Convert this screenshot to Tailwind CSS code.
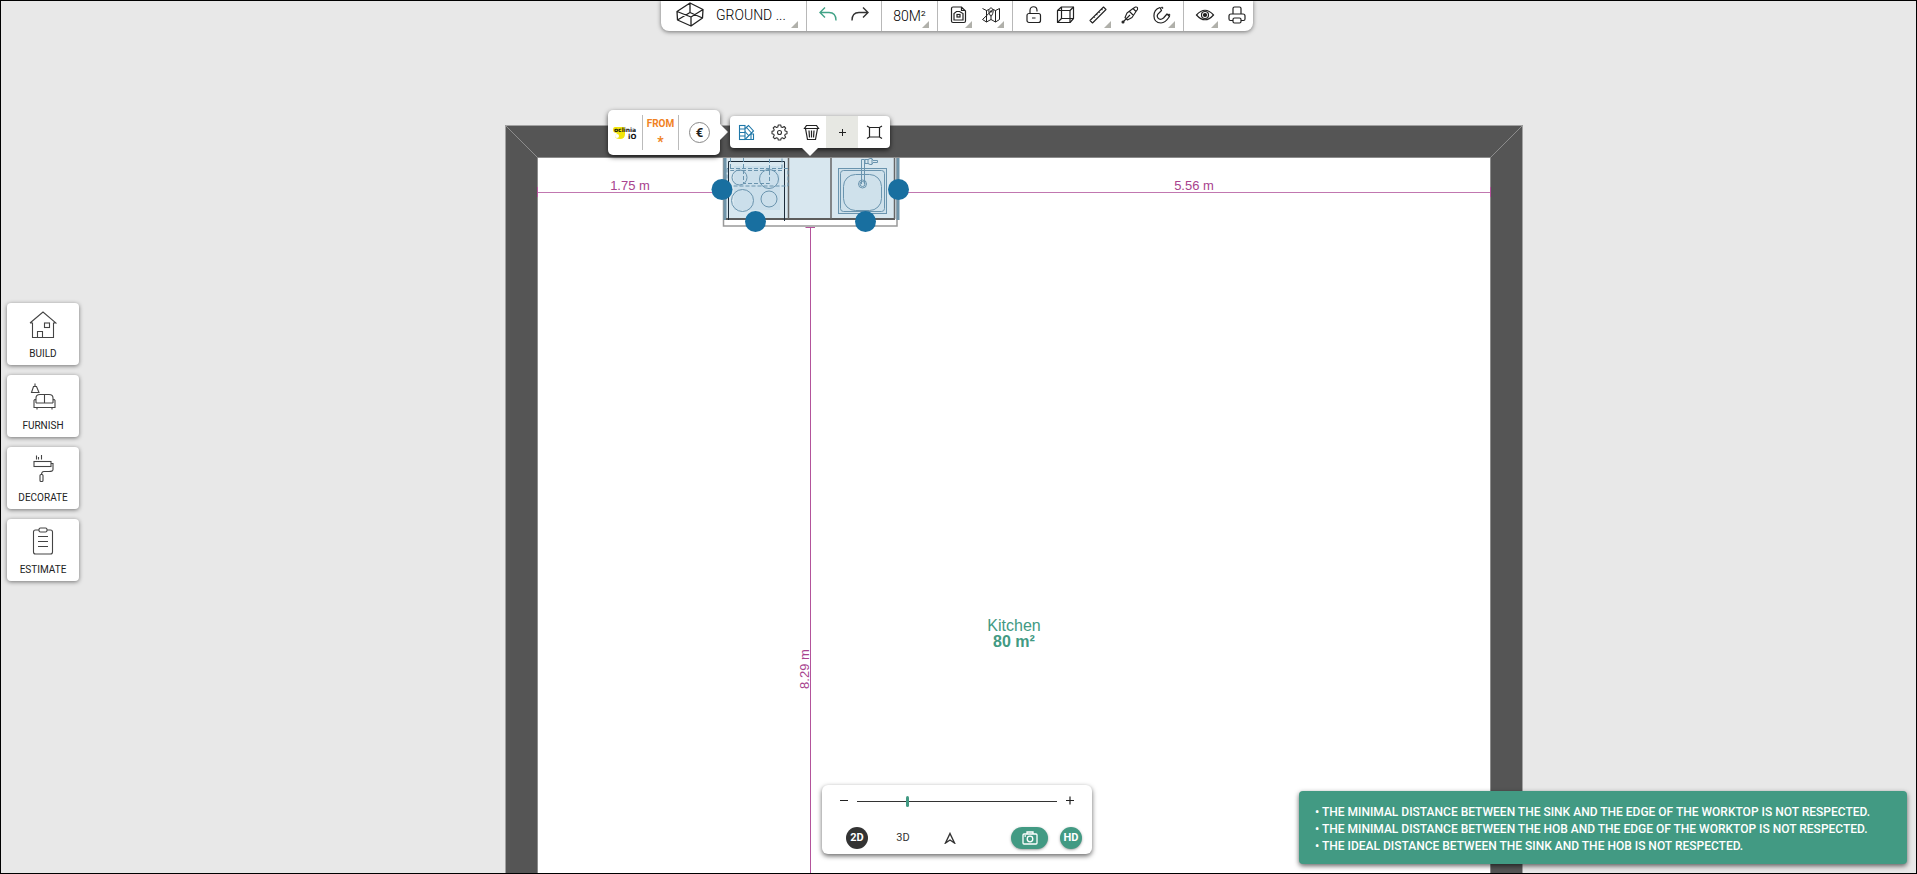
<!DOCTYPE html>
<html lang="en">
<head>
    <meta charset="UTF-8">
    <meta name="viewport" content="width=device-width, initial-scale=1">
    <title>Floor planner</title>
    <script src="https://cdn.jsdelivr.net/npm/@tailwindcss/browser@4"></script>
</head>
<body class="bg-[#e8e8e8] text-[#333333] font-['Roboto',sans-serif]">
<main class="relative h-screen overflow-hidden">

    <!-- Floor plan -->
    <svg class="absolute inset-0 w-full h-full" fill="none">
        <path d="M505.5 900V125.5H1522.5V900" fill="#555555" stroke="#a2a2a2"/>
        <path d="M537.5 900V157.5H1490.5V900" fill="#ffffff" stroke="#8c8c8c"/>
        <path d="M505.5 125.5L537.5 157.5M1522.5 125.5L1490.5 157.5" stroke="#8c8c8c"/>

        <!-- Kitchen unit -->
        <rect x="723" y="158" width="174" height="69" fill="#ffffff"/>
        <path d="M723.5 158V226H897V158" stroke="#999999" stroke-width="1.5"/>
        <rect x="725" y="158" width="171" height="61" fill="#d8e7ef"/>
        <rect x="734" y="166" width="46" height="44" fill="#cbdfeb"/>
        <rect x="839" y="169" width="48" height="44" fill="#cfe1eb"/>
        <path d="M725 158V220M898 158V220" stroke="#6f94a9" stroke-width="3"/>
        <path d="M726 219H895" stroke="#5c5c5c" stroke-width="2"/>
        <path d="M788.5 158V219M831 158V219M894.5 158V219" stroke="#666666" stroke-width="1.5"/>
        <path d="M728.5 220V161.5H784.5V221" stroke="#1d2d3b"/>
        <g stroke="#6a94ae">
            <circle cx="739.5" cy="177.5" r="7.5"/>
            <circle cx="769" cy="179" r="9.5"/>
            <circle cx="742.5" cy="200.5" r="11"/>
            <circle cx="769" cy="199" r="8"/>
            <path d="M730.5 158V170.5H782V158M743.5 158V183.5H769.5V158M727 168.5V186H788V168.5H727" stroke-dasharray="4 2"/>
            <rect x="838.5" y="168.5" width="48" height="45"/>
            <rect x="840.5" y="170.5" width="44" height="41" rx="3"/>
            <rect x="843.5" y="174.5" width="38" height="36" rx="12"/>
            <circle cx="862.5" cy="184" r="4"/>
            <circle cx="862.5" cy="184" r="2.5"/>
            <path d="M861.5 184V159.5H864.5V184M865 159.5h3l2-1h2l1 2h4.5v2h-4.5l-1 2h-2l-2-1h-3zM868 159v5M872 159v5"/>
        </g>

        <!-- Distances -->
        <g stroke="#b3539b">
            <path d="M537 192.5H722M898 192.5H1490" stroke="#c177b0"/>
            <path d="M537.5 187V197M1490.5 187V197M805.5 227.5H815M810.5 227V900"/>
        </g>
        <g fill="#a8438e" font-family="Liberation Sans, sans-serif" font-size="13" text-anchor="middle">
            <text x="630" y="190">1.75 m</text>
            <text x="1194" y="190">5.56 m</text>
            <text transform="translate(809 669) rotate(-90)">8.29 m</text>
        </g>
        <g fill="#429a83" font-family="Liberation Sans, sans-serif" font-size="16" text-anchor="middle">
            <text x="1014" y="631">Kitchen</text>
            <text x="1014" y="647" font-weight="bold">80 m²</text>
        </g>

        <!-- Drag handles -->
        <g fill="#186fa0">
            <circle cx="722" cy="189.5" r="10.5"/>
            <circle cx="898.5" cy="189.5" r="10.5"/>
            <circle cx="755.5" cy="221.5" r="10.5"/>
            <circle cx="865.5" cy="221.5" r="10.5"/>
        </g>
    </svg>

    <!-- Top toolbar -->
    <div class="absolute inset-x-0 top-0 flex justify-center pr-[3px]">
        <nav class="flex h-[31px] bg-white rounded-b-lg shadow-[0_1px_4px_rgba(0,0,0,0.5)]" aria-label="Plan tools">
            <button class="relative flex items-center w-[146px] h-[31px] pl-[15px] pb-[2px] gap-3 border-r border-[#b8b8b8]">
                <svg class="w-7 h-[25px]" viewBox="0 0 28 25" fill="none" stroke="#222222" stroke-width="1.3" stroke-linejoin="round"><path d="M14 1L27 7.5L26.500 16L15 24L1.500 18L1 9.500ZM1 9.500L15 15L27 7.500M15 15V24M14 1V10.500M1.500 18L14 10.500L26.500 16"/></svg>
                <span class="text-[14px] leading-5 font-light text-black">GROUND ...</span>
                <svg class="absolute right-2 bottom-[3px] w-[7px] h-[7px]" viewBox="0 0 7 7"><path d="M7 0V7H0z" fill="#b0b0aa"/></svg>
            </button>
            <div class="flex px-[5px] border-r border-[#b8b8b8]">
                <button class="flex items-center justify-center w-8 h-[31px] pb-[2px]" aria-label="Undo">
                    <svg class="w-5 h-5" viewBox="0 0 20 20" fill="none" stroke="#42a387" stroke-width="1.4"><path d="M7 2.500L2 7.500L7 12.500M2 7.500H11C15.500 7.500 18 10 18 15.500"/></svg>
                </button>
                <button class="flex items-center justify-center w-8 h-[31px] pb-[2px]" aria-label="Redo">
                    <svg class="w-5 h-5" viewBox="0 0 20 20" fill="none" stroke="#333333" stroke-width="1.4"><path d="M13 2.500L18 7.500L13 12.500M18 7.500H9C4.500 7.500 2 10 2 15.500"/></svg>
                </button>
            </div>
            <button class="relative w-14 h-[31px] text-[14px] leading-5 font-light text-black border-r border-[#b8b8b8]">80M²
                <svg class="absolute right-2 bottom-[3px] w-[7px] h-[7px]" viewBox="0 0 7 7"><path d="M7 0V7H0z" fill="#b0b0aa"/></svg>
            </button>
            <div class="flex px-[5px] border-r border-[#b8b8b8]">
                <button class="relative flex items-center justify-center w-8 h-[31px] pb-[2px]" aria-label="Plan document">
                    <svg class="w-5 h-5" viewBox="0 0 20 20" fill="none" stroke="#222222" stroke-width="1.2"><path d="M2.500 3.500Q2.500 2 4 2H12.500L16.500 6V16Q16.500 17.500 15 17.500H4Q2.500 17.500 2.500 16ZM12.500 2V5.500H16.500M5 15V8.500L7.500 6.500H10.500L14 8.500V15Z"/><rect x="8" y="9.500" width="3" height="2.500"/></svg>
                    <svg class="absolute right-[3px] bottom-[3px] w-[7px] h-[7px]" viewBox="0 0 7 7"><path d="M7 0V7H0z" fill="#b0b0aa"/></svg>
                </button>
                <button class="relative flex items-center justify-center w-8 h-[31px] pb-[2px]" aria-label="Map">
                    <svg class="w-5 h-5" viewBox="0 0 20 20" fill="none" stroke="#222222" stroke-width="1"><path d="M1.500 3.500L5.500 5.500L8 4.500M12 4.500L14.500 5.500L18.500 3.500V14.500L14.500 17L10 14.500L5.500 17L1.500 14.500ZM5.500 5.500V17M14.500 5.500V17M10 11.500C6.800 7.500 7.500 3 10 3S13.200 7.500 10 11.500ZM10 11.500V14.500"/><circle cx="10" cy="6.500" r=".7"/></svg>
                    <svg class="absolute right-[3px] bottom-[3px] w-[7px] h-[7px]" viewBox="0 0 7 7"><path d="M7 0V7H0z" fill="#b0b0aa"/></svg>
                </button>
            </div>
            <div class="flex px-[5px] border-r border-[#b8b8b8]">
                <button class="flex items-center justify-center w-8 h-[31px] pb-[2px]" aria-label="Lock">
                    <svg class="w-5 h-5" viewBox="0 0 20 20" fill="none" stroke="#222222" stroke-width="1.2"><rect x="3" y="8.500" width="13.500" height="9" rx="2"/><path d="M6 8.500V5.500C6 0.500 13 0.500 13 5.500V6.500M8 13H11.500"/></svg>
                </button>
                <button class="flex items-center justify-center w-8 h-[31px] pb-[2px]" aria-label="3D box">
                    <svg class="w-5 h-5" viewBox="0 0 20 20" fill="none" stroke="#222222" stroke-width="1.2" stroke-linejoin="round"><rect x="1.500" y="5.500" width="12.500" height="12"/><rect x="5.500" y="2" width="12" height="11.500"/><path d="M1.500 5.500L5.500 2M14 5.500L17.500 2M14 17.500L17.500 13.500M1.500 17.500L5.500 13.500"/></svg>
                </button>
                <button class="relative flex items-center justify-center w-8 h-[31px] pb-[2px]" aria-label="Measure">
                    <svg class="w-5 h-5" viewBox="0 0 20 20" fill="none" stroke="#222222" stroke-width="1.1" stroke-linejoin="round"><path d="M2 15.500L15.500 2L18 4.500L4.500 18ZM6 11.500L7 12.500M8.500 9L9.500 10M11 6.500L12 7.500M13.500 4L14.500 5"/></svg>
                    <svg class="absolute right-[3px] bottom-[3px] w-[7px] h-[7px]" viewBox="0 0 7 7"><path d="M7 0V7H0z" fill="#b0b0aa"/></svg>
                </button>
                <button class="flex items-center justify-center w-8 h-[31px] pb-[2px]" aria-label="Colour picker">
                    <svg class="w-5 h-5" viewBox="0 0 20 20" fill="none" stroke="#222222" stroke-width="1.1" stroke-linejoin="round"><path d="M5 12.500L7 8L13 3.500L16 6.500L12 12.500L7.500 15ZM13 3.500L15.500 2Q18 1.500 17.500 4.500L16 6.500M9.500 6.500L13.500 10.500M5 12.500L7.500 15M10 10L3.500 16.500"/><circle cx="3" cy="17" r="1" fill="#222222"/></svg>
                </button>
                <button class="relative flex items-center justify-center w-8 h-[31px] pb-[2px]" aria-label="Snap">
                    <svg class="w-5 h-5" viewBox="0 0 20 20" fill="none" stroke="#222222" stroke-width="1.2" stroke-linejoin="round"><path d="M8 2.500C0 5 -0.500 17.500 9 18C12.500 18 15.500 14.500 17.500 11.500L15 9L11.500 13C7 16.500 3 11.500 7 8L9.500 5.500Z"/><path d="M11 3.500L9.500 2M16.500 9L18 10.500" stroke-width="1.600"/></svg>
                    <svg class="absolute right-[3px] bottom-[3px] w-[7px] h-[7px]" viewBox="0 0 7 7"><path d="M7 0V7H0z" fill="#b0b0aa"/></svg>
                </button>
            </div>
            <div class="flex pl-[5px]">
                <button class="relative flex items-center justify-center w-8 h-[31px] pb-[2px]" aria-label="View">
                    <svg class="w-5 h-5" viewBox="0 0 20 20" fill="none" stroke="#222222" stroke-width="1.2"><path d="M1.500 10Q10 0.500 18.500 10Q10 19.500 1.500 10Z"/><circle cx="10" cy="10" r="3.500"/><circle cx="10" cy="10" r="1.500" fill="#222222"/></svg>
                    <svg class="absolute right-[3px] bottom-[3px] w-[7px] h-[7px]" viewBox="0 0 7 7"><path d="M7 0V7H0z" fill="#b0b0aa"/></svg>
                </button>
                <button class="flex items-center justify-center w-8 h-[31px] pb-[2px]" aria-label="Print">
                    <svg class="w-5 h-5" viewBox="0 0 20 20" fill="none" stroke="#222222" stroke-width="1.2"><path d="M6 9V3.500Q6 2 7.500 2H12.500Q14 2 14 3.500V9M6 15.500H3.500Q2 15.500 2 14V11Q2 9 4 9H16Q18 9 18 11V14Q18 15.500 16.500 15.500H14"/><rect x="6" y="13" width="8" height="5" rx="1.500"/></svg>
                </button>
            </div>
        </nav>
    </div>

    <!-- Product popup -->
    <div class="absolute left-[608px] top-[110px] flex items-center w-28 h-[45px] bg-white rounded-[5px] shadow-[0_2px_5px_rgba(0,0,0,0.7)]">
        <div class="flex justify-center w-[35px] h-[35px] items-center border-r border-[#bbbbbb]">
            <svg class="w-[26px] h-4" viewBox="0 0 26 16" font-family="DejaVu Sans, sans-serif" font-weight="bold">
                <path d="M3 2H11Q13 2 13 4V9Q13 14 8 14Q3 14 3 11L5 8Q1 8 1 5Q1 2 3 2Z" fill="#f2e50b"/>
                <circle cx="5" cy="11" r="2" fill="#ffffff"/>
                <text x="2" y="7" font-size="6" fill="#111111">oclinia</text>
                <text x="16" y="14" font-size="7" fill="#111111">iO</text>
            </svg>
        </div>
        <div class="flex flex-col items-center w-9 h-[35px] border-r border-[#bbbbbb] text-[#f08223] font-bold">
            <span class="text-[10px] leading-[17px]">FROM</span>
            <span class="text-[14px] leading-[20px]">*</span>
        </div>
        <button class="flex items-center justify-center w-[21px] h-[21px] ml-[10px] rounded-full border border-[#888888] text-[13px] font-bold text-[#222222]">€</button>
        <svg class="absolute left-full top-[14px] w-2 h-4" viewBox="0 0 8 16"><path d="M0 0L8 8L0 16z" fill="#ffffff"/></svg>
    </div>

    <!-- Object actions popup -->
    <div class="absolute left-[730px] top-[116px] flex h-8 bg-white rounded shadow-[0_2px_5px_rgba(0,0,0,0.7)]">
        <button class="flex items-center justify-center w-8" aria-label="Finishes">
            <svg class="w-[17px] h-[17px]" viewBox="0 0 17 17" fill="none" stroke="#1f77a8" stroke-width="1.1"><rect x="1.500" y="1.500" width="5.500" height="14"/><path d="M1.500 5H7M1.500 8.500H7M1.500 12H7M7 4.500L10.500 1.500L15.500 7L7 15.500M7 15.500H15.500V10H12.500M8.500 3.500L13.500 9M7 7.500L11 12M13 10V15.500"/></svg>
        </button>
        <button class="flex items-center justify-center w-8 pl-[2px]" aria-label="Settings">
            <svg class="w-[17px] h-[17px]" viewBox="0 0 17 17" fill="none" stroke="#333333" stroke-width="1.1" stroke-linejoin="round"><path d="M7.300 1H9.700L10.200 3L11.500 3.500L13.200 2.500L14.700 4.100L13.700 5.800L14.200 7L16 7.500V9.700L14.200 10.200L13.700 11.500L14.700 13.200L13 14.800L11.400 13.800L10.200 14.200L9.700 16H7.300L6.800 14.200L5.500 13.800L3.800 14.800L2.200 13.200L3.200 11.500L2.800 10.200L1 9.700V7.300L2.800 6.900L3.200 5.700L2.200 4L3.900 2.400L5.500 3.500L6.800 3Z"/><circle cx="8.500" cy="8.500" r="2"/></svg>
        </button>
        <button class="flex items-center justify-center w-8 pl-[2px]" aria-label="Delete">
            <svg class="w-[17px] h-[17px]" viewBox="0 0 17 17" fill="none" stroke="#222222" stroke-width="1.2"><path d="M3.500 1.500H13.500L15.500 4.500H1.500ZM2.500 4.500L4.500 15.500H12.500L14.500 4.500M6 6.500L6.500 13.500M8.500 6.500V13.500M11 6.500L10.500 13.500"/></svg>
        </button>
        <button class="flex items-center justify-center w-8 bg-[#e7e8e3]" aria-label="More">
            <svg class="w-[9px] h-[9px]" viewBox="0 0 9 9" stroke="#222222"><path d="M4.500 1V8M1 4.500H8"/></svg>
        </button>
        <button class="flex items-center justify-center w-8" aria-label="Resize">
            <svg class="w-[17px] h-[17px]" viewBox="0 0 17 17" fill="none" stroke="#222222" stroke-width="1.2"><path d="M3.500 3.500H13.500V13H3.500ZM3.500 3.500L1 2M13.500 3.500L16 2M3.500 13L1 14.500M13.500 13L16 14.500"/></svg>
        </button>
        <svg class="absolute top-full left-[72px] w-4 h-2" viewBox="0 0 16 8"><path d="M0 0H16L8 8z" fill="#ffffff"/></svg>
    </div>

    <!-- Side menu -->
    <nav class="absolute left-[7px] top-[303px] flex flex-col gap-[10px] text-[10px] leading-3 text-[#222222]" aria-label="Main menu">
        <button class="flex flex-col items-center w-[72px] h-[62px] pt-2 gap-[9px] bg-white rounded shadow-[0_1px_4px_rgba(0,0,0,0.5)]">
            <svg class="w-7 h-7" viewBox="0 0 28 28" fill="none" stroke="#444444" stroke-width="1.1"><path d="M1 12L14 1L27 12H24.500V26.500H3.500V12H1M8.500 26.500V20.500H13.500V26.500"/><rect x="15.500" y="12" width="5" height="4.500"/></svg>
            BUILD
        </button>
        <button class="flex flex-col items-center w-[72px] h-[62px] pt-2 gap-[9px] bg-white rounded shadow-[0_1px_4px_rgba(0,0,0,0.5)]">
            <svg class="w-7 h-7" viewBox="0 0 28 28" fill="none" stroke="#444444" stroke-width="1.1"><path d="M6 0.500V3.500M4.500 3.500H7.500L10 9.500H2.500ZM7 17V15Q7 11.500 11 11.500H20Q24 11.500 24 15V17M15.500 11.500V20M7 20H24M7 20V17.500Q6 15.500 5 17.500V24.500H26V17.500Q25 15.500 24 17.500V20M8 24.500V26.500M23 24.500V26.500"/></svg>
            FURNISH
        </button>
        <button class="flex flex-col items-center w-[72px] h-[62px] pt-2 gap-[9px] bg-white rounded shadow-[0_1px_4px_rgba(0,0,0,0.5)]">
            <svg class="w-7 h-7" viewBox="0 0 28 28" fill="none" stroke="#444444" stroke-width="1.1"><path d="M7.500 0.500V4.500M9.500 2V4.500M12.500 0V4.500"/><rect x="5" y="6.500" width="17" height="5"/><path d="M22 8.500H24V14.500Q24 16.500 20 16.500H15Q12.500 16.500 12.500 20"/><rect x="11" y="19.500" width="3" height="7" rx="1"/></svg>
            DECORATE
        </button>
        <button class="flex flex-col items-center w-[72px] h-[62px] pt-2 gap-[9px] bg-white rounded shadow-[0_1px_4px_rgba(0,0,0,0.5)]">
            <svg class="w-7 h-7" viewBox="0 0 28 28" fill="none" stroke="#444444" stroke-width="1.1"><path d="M10 3H6.500Q4.500 3 4.500 5V25Q4.500 27 6.500 27H21.500Q23.500 27 23.500 25V5Q23.500 3 21.500 3H18M9 9.500H19M9 14.500H19M9 19.500H19"/><rect x="10" y="1" width="8" height="4" rx="1.500"/></svg>
            ESTIMATE
        </button>
    </nav>

    <!-- Zoom and view mode -->
    <div class="absolute inset-x-0 bottom-5 flex justify-center pr-[3px]">
        <section class="flex flex-col justify-between w-[270px] h-[69px] pt-2 pb-[5px] bg-white rounded-md shadow-[0_2px_5px_rgba(0,0,0,0.6)]">
            <div class="flex items-center h-4 pl-[17px] gap-2">
                <button class="w-[10px]" aria-label="Zoom out">
                    <svg class="w-[10px] h-[10px]" viewBox="0 0 10 10" stroke="#222222"><path d="M1 4.500H9"/></svg>
                </button>
                <input type="range" min="0" max="100" value="25" aria-label="Zoom" class="appearance-none w-[200px] h-3 bg-transparent [&::-webkit-slider-runnable-track]:h-px [&::-webkit-slider-runnable-track]:bg-[#333333] [&::-webkit-slider-thumb]:appearance-none [&::-webkit-slider-thumb]:w-[3px] [&::-webkit-slider-thumb]:h-[11px] [&::-webkit-slider-thumb]:-mt-[5px] [&::-webkit-slider-thumb]:rounded-xs [&::-webkit-slider-thumb]:bg-[#429a83]">
                <button class="w-[10px]" aria-label="Zoom in">
                    <svg class="w-[10px] h-[10px]" viewBox="0 0 10 10" stroke="#222222"><path d="M1 4.500H9M5 0.500V8.500" stroke-width="1.2"/></svg>
                </button>
            </div>
            <div class="flex items-center pl-6 pr-[10px] text-[11px] leading-4">
                <button class="w-[22px] h-[22px] rounded-full bg-[#333333] text-white font-bold">2D</button>
                <button class="w-[22px] h-[22px] ml-6">3D</button>
                <button class="flex items-center justify-center w-[22px] h-[22px] ml-[25px]" aria-label="First person view">
                    <svg class="w-3 h-3" viewBox="0 0 12 12" fill="none" stroke="#333333" stroke-width="1.4"><path d="M6 1.500L10.500 11L6 8L1.500 11Z"/></svg>
                </button>
                <button class="flex items-center justify-center w-[37px] h-[22px] ml-auto rounded-full bg-[#429a83] shadow-sm shadow-black/30" aria-label="Take picture">
                    <svg class="w-4 h-[14px]" viewBox="0 0 16 14" fill="none" stroke="#ffffff" stroke-width="1.3"><rect x="1" y="3" width="14" height="10" rx="1"/><path d="M5 3V1H11V3"/><circle cx="8" cy="8" r="2.800"/><path d="M2.500 5H4"/></svg>
                </button>
                <button class="w-[22px] h-[22px] ml-3 rounded-full bg-[#429a83] text-white font-bold shadow-sm shadow-black/30">HD</button>
            </div>
        </section>
    </div>

    <!-- Warnings -->
    <ul class="absolute right-[10px] bottom-[10px] w-[608px] px-4 pt-[13px] pb-[9px] rounded bg-[#429a83] text-white text-[12px] leading-[17px] font-medium shadow-[0_2px_5px_rgba(0,0,0,0.6)]" role="status">
        <li>• THE MINIMAL DISTANCE BETWEEN THE SINK AND THE EDGE OF THE WORKTOP IS NOT RESPECTED.</li>
        <li>• THE MINIMAL DISTANCE BETWEEN THE HOB AND THE EDGE OF THE WORKTOP IS NOT RESPECTED.</li>
        <li>• THE IDEAL DISTANCE BETWEEN THE SINK AND THE HOB IS NOT RESPECTED.</li>
    </ul>

    <div class="absolute inset-0 border border-black pointer-events-none"></div>
</main>
</body>
</html>
